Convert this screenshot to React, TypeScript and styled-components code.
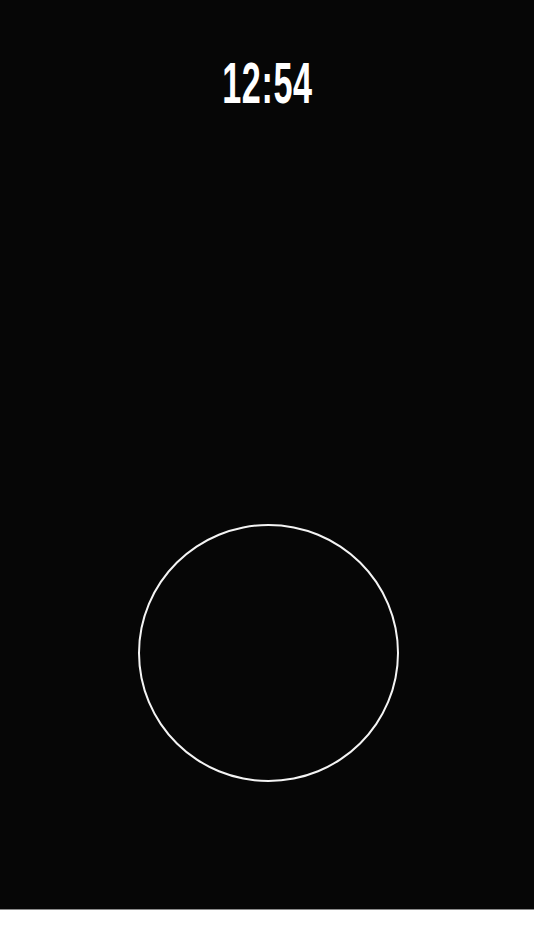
import { createGlobalStyle } from 'styled-components';
import styled from 'styled-components';

const GlobalStyle = createGlobalStyle`
    html, body {
        margin: 0;
        padding: 0;
        background: #fff;
    }
    #root {
        width: 534px;
        height: 950px;
    }
`;

const Screen = styled.main`
    width: 534px;
    height: 910px;
    background: #060606;
    border-bottom: 1px solid #8a8a8a;
    box-sizing: border-box;
    display: flex;
    flex-direction: column;
    align-items: center;
    padding: 55px 0 127px;
`;

const Clock = styled.div`
    font-family: "Liberation Sans", Arial, sans-serif;
    font-weight: 700;
    font-size: 57px;
    line-height: 1;
    color: #fff;
    transform: scaleX(0.6);
    letter-spacing: 1px;
`;

const Spacer = styled.div`
    flex: 1;
`;

const Ring = styled.div<{ w: number; h: number }>`
    width: ${p => p.w}px;
    height: ${p => p.h}px;
    box-sizing: border-box;
    border: 2.5px solid #f4f4f4;
    border-radius: 50%;
    margin-left: 2px;
`;

const App = () => {
    return (
        <>
            <GlobalStyle />
            <Screen>
                <Clock>12:54</Clock>
                <Spacer />
                <Ring w={261} h={258} />
            </Screen>
        </>
    );
};

export default App;
